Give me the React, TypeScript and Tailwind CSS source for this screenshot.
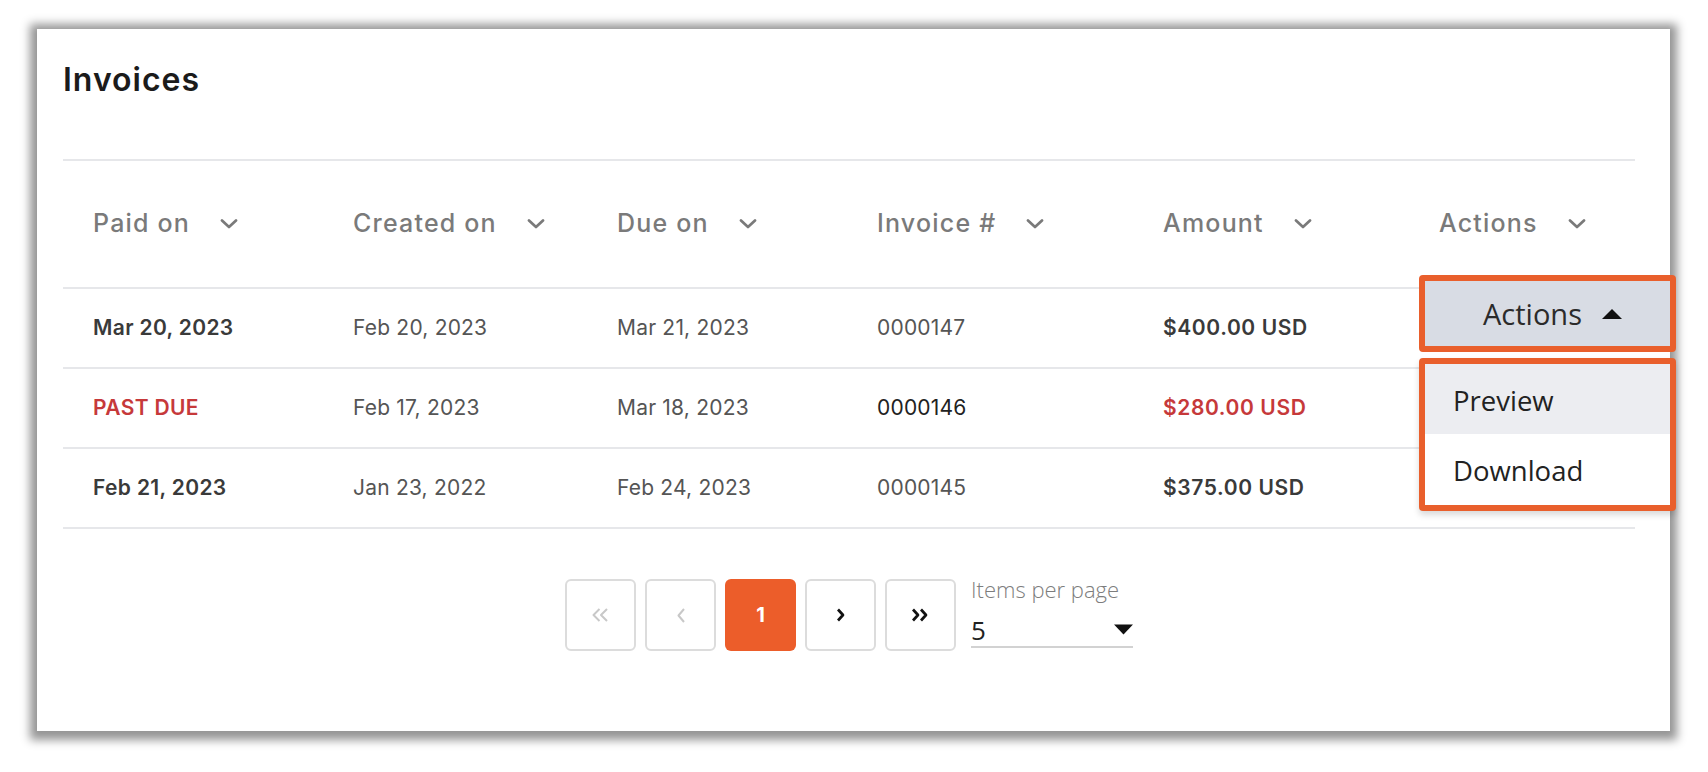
import React from "react";

type Row = {
  paid: string;
  pastDue?: boolean;
  created: string;
  due: string;
  invoice: string;
  amount: string;
};

const rows: Row[] = [
  { paid: "Mar 20, 2023", created: "Feb 20, 2023", due: "Mar 21, 2023", invoice: "0000147", amount: "$400.00 USD" },
  { paid: "PAST DUE", pastDue: true, created: "Feb 17, 2023", due: "Mar 18, 2023", invoice: "0000146", amount: "$280.00 USD" },
  { paid: "Feb 21, 2023", created: "Jan 23, 2022", due: "Feb 24, 2023", invoice: "0000145", amount: "$375.00 USD" },
];

const headers = ["Paid on", "Created on", "Due on", "Invoice #", "Amount", "Actions"];

const gridCols = "grid grid-cols-[260px_264px_260px_286px_276px_1fr]";

function Chevron() {
  return (
    <svg width="18" height="10" viewBox="0 0 18 10" className="ml-[30px] shrink-0">
      <polyline points="2,1.5 9,8 16,1.5" fill="none" stroke="#7a7a7a" strokeWidth="2.7" strokeLinecap="round" strokeLinejoin="round" />
    </svg>
  );
}

function PageButton({ children, active }: { children: React.ReactNode; active?: boolean }) {
  return (
    <div
      className={
        active
          ? "w-[71px] h-[72px] rounded-[6px] bg-[#ec5d2a] flex items-center justify-center"
          : "w-[71px] h-[72px] rounded-[6px] border-2 border-[#dcdcdc] bg-white flex items-center justify-center"
      }
    >
      {children}
    </div>
  );
}

export default function App() {
  return (
    <div className="min-h-screen w-full bg-white pt-[29px] pl-[37px] font-['Inter',sans-serif]">
      <div className="relative w-[1633px] h-[702px] bg-white shadow-[0_2px_9px_7px_rgba(0,0,0,0.42)] pt-[35px] pl-[26px]">
        <h1 className="text-[32px] leading-[32px] font-semibold tracking-[1px] text-[#1b1b1b]">Invoices</h1>

        <div className="w-[1572px] mt-[63px]">
          {/* header */}
          <div className={`${gridCols} h-[130px] border-y-2 border-[#e6e7ea]`}>
            {headers.map((h) => (
              <div key={h} className="pl-[30px] flex items-center">
                <span className="text-[25px] font-medium text-[#7a7a7a] tracking-[1.2px]">{h}</span>
                <Chevron />
              </div>
            ))}
          </div>

          {rows.map((r) => (
            <div key={r.invoice} className={`${gridCols} h-[80px] border-b-2 border-[#e6e7ea] text-[21px] tracking-[0.2px]`}>
              <div className={`pl-[30px] flex items-center font-semibold tracking-[0.35px] ${r.pastDue ? "text-[#c6393a]" : "text-[#3a3a3a]"}`}>
                {r.paid}
              </div>
              <div className="pl-[30px] flex items-center text-[#555]">{r.created}</div>
              <div className="pl-[30px] flex items-center text-[#555]">{r.due}</div>
              <div className={`pl-[30px] flex items-center ${r.pastDue ? "text-[#222]" : "text-[#555]"}`}>{r.invoice}</div>
              <div className={`pl-[30px] flex items-center font-semibold tracking-[0.6px] ${r.pastDue ? "text-[#c6393a]" : "text-[#3a3a3a]"}`}>
                {r.amount}
              </div>
              <div />
            </div>
          ))}

          {/* pagination */}
          <div className="mt-[46px] flex justify-center items-start">
            <div className="mt-[4px] flex gap-[9px]">
              <PageButton>
                <svg width="19" height="14" viewBox="0 0 19 14">
                  <polyline points="8.5,1 2.5,7 8.5,13" fill="none" stroke="#c8c8c8" strokeWidth="2" strokeLinejoin="round" />
                  <polyline points="16,1 10,7 16,13" fill="none" stroke="#c8c8c8" strokeWidth="2" strokeLinejoin="round" />
                </svg>
              </PageButton>
              <PageButton>
                <svg width="10" height="15" viewBox="0 0 10 15">
                  <polyline points="8,1 2.5,7.5 8,14" fill="none" stroke="#c8c8c8" strokeWidth="2" strokeLinejoin="round" />
                </svg>
              </PageButton>
              <PageButton active>
                <span className="text-white text-[20px] font-bold">1</span>
              </PageButton>
              <PageButton>
                <svg width="9" height="14" viewBox="0 0 9 14">
                  <polyline points="2,1.5 7,7 2,12.5" fill="none" stroke="#111" strokeWidth="2.7" strokeLinejoin="round" />
                </svg>
              </PageButton>
              <PageButton>
                <svg width="19" height="14" viewBox="0 0 19 14">
                  <polyline points="2,1.5 7,7 2,12.5" fill="none" stroke="#111" strokeWidth="2.7" strokeLinejoin="round" />
                  <polyline points="10,1.5 15,7 10,12.5" fill="none" stroke="#111" strokeWidth="2.7" strokeLinejoin="round" />
                </svg>
              </PageButton>
            </div>
            <div className="ml-[15px] w-[162px] font-['Open_Sans',sans-serif]">
              <div className="h-[28px] leading-[28px] text-[22px] font-light text-[#7d7d7d]">Items per page</div>
              <div className="mt-[10px] h-[35px] flex items-center justify-between border-b-2 border-[#d2d2d2]">
                <span className="text-[26px] text-[#222] leading-none">5</span>
                <svg width="19" height="11" viewBox="0 0 19 11">
                  <polygon points="0,0.5 19,0.5 9.5,10.5" fill="#111" />
                </svg>
              </div>
            </div>
          </div>
        </div>

        {/* open actions dropdown */}
        <div className="absolute left-[1382px] top-[246px] w-[257px] font-['Open_Sans',sans-serif]">
          <div className="h-[77px] rounded-[4px] border-[6px] border-[#e95f2c] bg-[#d8dce4] flex items-center justify-center gap-[20px] pl-[10px]">
            <span className="text-[29px] text-[#2b2b2b]">Actions</span>
            <svg width="20" height="10" viewBox="0 0 20 10">
              <polygon points="10,0 20,10 0,10" fill="#111" />
            </svg>
          </div>
          <div className="mt-[6px] h-[153px] rounded-[4px] border-[6px] border-[#e95f2c] bg-white overflow-hidden shadow-[0_4px_6px_rgba(0,0,0,0.15)]">
            <div className="h-[70px] bg-[#ecedf1] flex items-center pl-[28px] pt-[4px] text-[27.5px] text-[#222]">Preview</div>
            <div className="h-[70px] flex items-center pl-[28px] pt-[4px] text-[27.5px] text-[#222]">Download</div>
          </div>
        </div>
      </div>
    </div>
  );
}
